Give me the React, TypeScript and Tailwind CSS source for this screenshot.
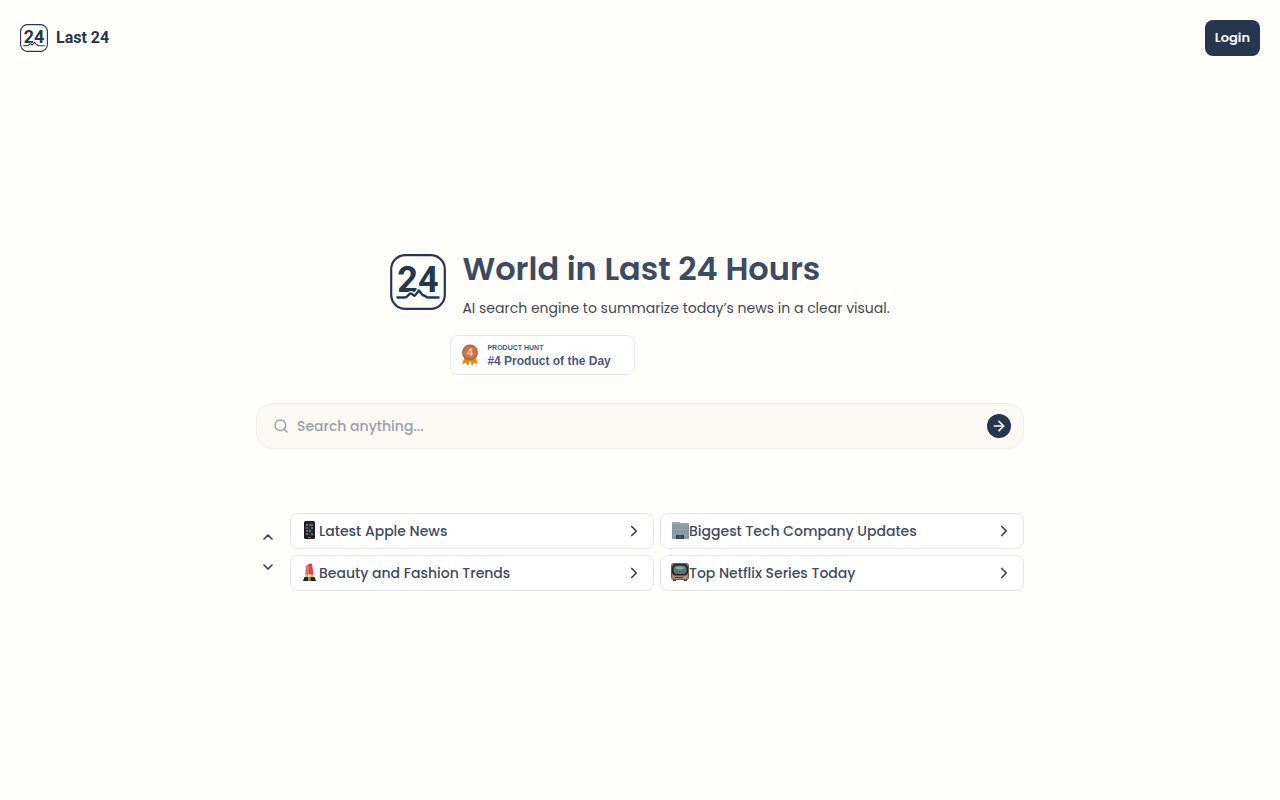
import type { ReactNode } from "react";
import { ArrowRight, ChevronDown, ChevronRight, ChevronUp, Search } from "lucide-react";

function Logo({ className }: { className: string }) {
  return (
    <svg viewBox="0 0 56 56" className={className} role="img" aria-label="Last 24 logo">
      <rect x="1.200" y="1.200" width="53.600" height="53.600" rx="14" fill="#fffffc" stroke="#26364f" strokeWidth="2.200" />
      <text x="28" y="38" textAnchor="middle" fontFamily="Roboto, sans-serif" fontWeight="700" fontSize="36" fill="#26364f">
        24
      </text>
      <path
        d="M7 43.500h8c3 0 3-4 6-4 2 0 2 3 4 2l4-5 4 5c2-1 2 2 5 2h10"
        fill="none"
        stroke="#fffffc"
        strokeWidth="5"
        strokeLinejoin="round"
      />
      <path
        d="M7.500 43.500h7.500c3 0 3-4 6-4 2 0 2 3 4 2l4-5 4 5c2-1 2 2 5 2h10.500"
        fill="none"
        stroke="#26364f"
        strokeWidth="2.400"
        strokeLinecap="round"
        strokeLinejoin="round"
      />
    </svg>
  );
}

function Medal() {
  return (
    <svg viewBox="0 0 18 22" className="h-[22px] w-[18px]" aria-hidden="true">
      <path d="m4 12-3 8 4-1 2 3 3-8zM14 12l3 8-4-1-2 3-3-8z" fill="#e58a1f" />
      <circle cx="9" cy="8.500" r="8" fill="#b8683f" />
      <circle cx="9" cy="8.500" r="6" fill="#cf784a" />
      <text x="9" y="12" textAnchor="middle" fontFamily="Liberation Sans, sans-serif" fontSize="10" fill="#f8c9a5">4</text>
    </svg>
  );
}

function Phone() {
  return (
    <svg viewBox="0 0 18 18" className="size-[18px]" aria-hidden="true">
      <rect x="3" y="0" width="11" height="18" rx="1.500" fill="#1c1f24" />
      <rect x="4.500" y="2" width="8" height="13" fill="#292b36" />
      <path d="M5 3h2v2H5zM10 6h2v2h-2zM5 9h2v2H5z" fill="#55707a" />
      <path d="M8 3h2v2H8zM5 6h2v2H5zM10 12h2v2h-2z" fill="#805060" />
      <path d="M8 9h2v2H8zM5 12h2v2H5zM10 3h2v2h-2z" fill="#4d7a56" />
      <path d="M7 16.500h3" stroke="#777" />
    </svg>
  );
}

function Lipstick() {
  return (
    <svg viewBox="0 0 18 18" className="size-[18px]" aria-hidden="true">
      <path d="M5 3.500c1-2 4-3.500 6-3l1.500 11.500H4.500z" fill="#dc4350" />
      <path d="M5 3.500c2-2 3-1 3 1v7.500H4.500z" fill="#ec6a72" />
      <path d="M4.500 11.500h8v3h-8z" fill="#d8bd5c" />
      <path d="M7 11.500h2.500v3H7z" fill="#fff0a4" />
      <path d="M3.500 14h10l1.500 4H2z" fill="#25232a" />
      <path d="M7 14h2.500v4H7z" fill="#a89458" />
    </svg>
  );
}

function Building() {
  return (
    <svg viewBox="0 0 18 18" className="size-[18px]" aria-hidden="true">
      <path d="M1 1h8v1h9v16H1z" fill="#8796a3" />
      <path d="M1 1h8v1h9v1.500H1z" fill="#a0a5a8" />
      <path d="M2 5.500h15M2 8.500h15M2 11.500h15M2 14.500h15" stroke="#98a6ae" strokeDasharray="2 1" />
      <path d="M5 14h8v4H5z" fill="#354451" />
      <path d="M8.500 15h1v3h-1z" fill="#60727e" />
    </svg>
  );
}

function Television() {
  return (
    <svg viewBox="0 0 18 18" className="size-[18px]" aria-hidden="true">
      <path d="M2 15h3v3H2zM13 15h3v3h-3z" fill="#51382f" />
      <rect x="0.500" y="0.500" width="17" height="16" rx="2" fill="#a88476" stroke="#76574d" />
      <rect x="1" y="1" width="16" height="11.500" rx="4" fill="#202a2d" />
      <rect x="2.500" y="2.500" width="13" height="8.500" rx="3.500" fill="#5c7474" />
      <path d="M4 5c2-2 7-2 10 0-3 2-7 2-10 0z" fill="#91a6a2" />
      <path d="M4 14.500h8" stroke="#503c36" />
      <circle cx="14.500" cy="14.500" r="1" fill="#d2b29c" />
    </svg>
  );
}

function Topic({ icon, label }: { icon: ReactNode; label: string }) {
  return (
    <button
      type="button"
      className="flex h-9 items-center rounded-lg border border-[#e5e7eb] bg-white px-2.5 text-left text-[14px] leading-5 font-medium text-[#414b60]"
    >
      <span className="pb-0.5">{icon}</span>
      <span className="min-w-0 flex-1 truncate">{label}</span>
      <ChevronRight className="size-[18px] text-[#374151]" strokeWidth={2.2} aria-hidden="true" />
    </button>
  );
}

export default function App() {
  return (
    <div className="flex min-h-screen flex-col bg-[#fffefb] font-[Poppins,Inter,sans-serif]">
      <header className="flex items-center justify-between p-5">
        <a href="#" className="flex items-center gap-2 font-[Roboto,sans-serif] text-base font-bold text-[#26364f]">
          <Logo className="size-7" />
          Last 24
        </a>
        <button type="button" className="h-9 rounded-lg bg-[#26364f] px-2.5 text-[13px] font-semibold text-white">
          Login
        </button>
      </header>

      <main className="mx-auto flex w-full max-w-3xl flex-col pt-[172px]">
        <section className="mx-auto">
          <div className="flex items-start gap-4">
            <Logo className="mt-1.5 size-14 shrink-0" />
            <div>
              <h1 className="text-[32px] leading-[42px] font-semibold text-[#3d4b60]">World in Last 24 Hours</h1>
              <p className="mt-2 text-[14px] leading-5 text-[#414854]">
                AI search engine to summarize today’s news in a clear visual.
              </p>
            </div>
          </div>
          <a
            href="#"
            className="mt-[17px] ml-15 flex h-10 w-[185px] items-center gap-2 rounded-lg border border-[#e8e9ef] bg-white pl-2.5 font-[Liberation_Sans,sans-serif] font-bold text-[#4b587c]"
          >
            <Medal />
            <span className="flex flex-col pt-0.5">
              <span className="text-[7px] leading-[10px]">PRODUCT HUNT</span>
              <span className="text-[12px] leading-4">#4 Product of the Day</span>
            </span>
          </a>
        </section>

        <form
          onSubmit={(event) => event.preventDefault()}
          className="mt-7 flex h-[46px] items-center rounded-2xl border border-[#f2f0ed] bg-[#fcf9f4] pr-3 pl-4"
        >
          <Search className="size-4 shrink-0 text-[#9ca3af]" strokeWidth={2.2} aria-hidden="true" />
          <input
            type="text"
            aria-label="Search"
            placeholder="Search anything..."
            className="ml-2 min-w-0 flex-1 bg-transparent text-[14px] leading-5 font-medium text-[#414b60] outline-none placeholder:text-[#9b9ea8]"
          />
          <button
            type="submit"
            aria-label="Submit search"
            className="flex size-6 items-center justify-center rounded-full bg-[#26364f] text-white"
          >
            <ArrowRight className="size-4" strokeWidth={2.4} />
          </button>
        </form>

        <section className="mt-16 flex items-center gap-2.5">
          <div className="flex w-6 flex-col items-center gap-3.5">
            <button type="button" aria-label="Previous topics" className="text-[#374151]">
              <ChevronUp className="size-4" strokeWidth={2.4} />
            </button>
            <button type="button" aria-label="Next topics" className="text-[#374151]">
              <ChevronDown className="size-4" strokeWidth={2.4} />
            </button>
          </div>
          <div className="grid flex-1 grid-cols-2 gap-1.5">
            <Topic icon={<Phone />} label="Latest Apple News" />
            <Topic icon={<Building />} label="Biggest Tech Company Updates" />
            <Topic icon={<Lipstick />} label="Beauty and Fashion Trends" />
            <Topic icon={<Television />} label="Top Netflix Series Today" />
          </div>
        </section>
      </main>
    </div>
  );
}
